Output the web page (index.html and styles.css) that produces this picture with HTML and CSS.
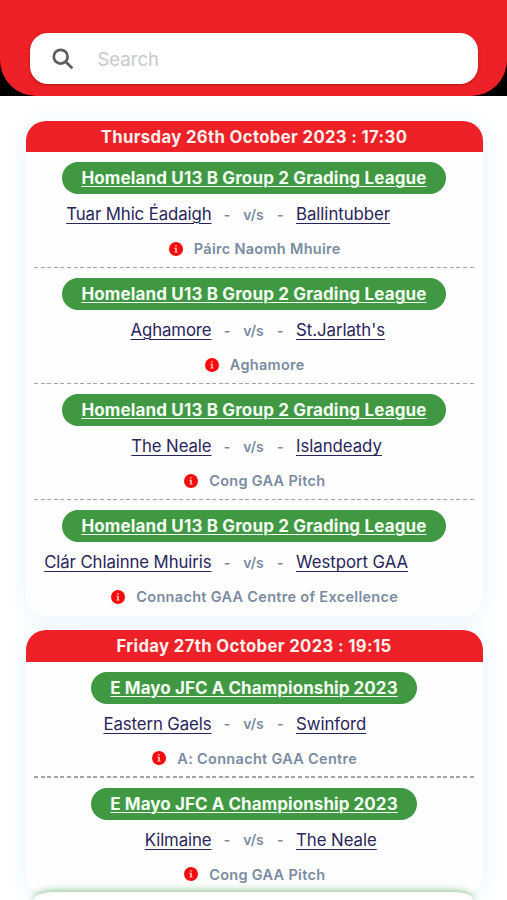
FILE: index.html
```html
<!DOCTYPE html>
<html lang="en">
<head>
<meta charset="utf-8">
<title>Fixtures</title>
<link rel="stylesheet" href="styles.css">
</head>
<body>
<svg class="defs" aria-hidden="true">
  <symbol id="info" viewBox="0 0 14 14">
    <circle cx="7" cy="7" r="7" fill="#fb0a0d"/>
    <path d="M6.2 3.2h1.6v1.4H6.2zM5.3 5.8h2.5v3.9h.9v.9H5.3v-.9h.9V6.7h-.9z" fill="#ffc9c4"/>
  </symbol>
</svg>
<header class="top">
  <div class="top-panel">
    <div class="search">
      <svg class="search-icon" viewBox="0 0 22 22"><circle cx="8.7" cy="8.7" r="6.9"/><path d="M13.7 13.7l6.6 6.6"/></svg>
      <span class="placeholder">Search</span>
    </div>
  </div>
</header>
<main class="list">
  <section class="card">
    <h2 class="date">Thursday 26th October 2023 : 17:30</h2>
    <article class="fixture">
      <a class="league">Homeland U13 B Group 2 Grading League</a>
      <div class="teams"><a class="team home">Tuar Mhic Éadaigh</a><span>-</span><span>v/s</span><span>-</span><a class="team">Ballintubber</a></div>
      <div class="venue"><svg class="info"><use href="#info"/></svg><span>Páirc Naomh Mhuire</span></div>
    </article>
    <article class="fixture">
      <a class="league">Homeland U13 B Group 2 Grading League</a>
      <div class="teams"><a class="team home">Aghamore</a><span>-</span><span>v/s</span><span>-</span><a class="team">St.Jarlath's</a></div>
      <div class="venue"><svg class="info"><use href="#info"/></svg><span>Aghamore</span></div>
    </article>
    <article class="fixture">
      <a class="league">Homeland U13 B Group 2 Grading League</a>
      <div class="teams"><a class="team home">The Neale</a><span>-</span><span>v/s</span><span>-</span><a class="team">Islandeady</a></div>
      <div class="venue"><svg class="info"><use href="#info"/></svg><span>Cong GAA Pitch</span></div>
    </article>
    <article class="fixture">
      <a class="league">Homeland U13 B Group 2 Grading League</a>
      <div class="teams"><a class="team home">Clár Chlainne Mhuiris</a><span>-</span><span>v/s</span><span>-</span><a class="team">Westport GAA</a></div>
      <div class="venue"><svg class="info"><use href="#info"/></svg><span>Connacht GAA Centre of Excellence</span></div>
    </article>
  </section>
  <section class="card card-short">
    <h2 class="date">Friday 27th October 2023 : 19:15</h2>
    <article class="fixture">
      <a class="league">E Mayo JFC A Championship 2023</a>
      <div class="teams"><a class="team home">Eastern Gaels</a><span>-</span><span>v/s</span><span>-</span><a class="team">Swinford</a></div>
      <div class="venue"><svg class="info"><use href="#info"/></svg><span>A: Connacht GAA Centre</span></div>
    </article>
    <article class="fixture">
      <a class="league">E Mayo JFC A Championship 2023</a>
      <div class="teams"><a class="team home">Kilmaine</a><span>-</span><span>v/s</span><span>-</span><a class="team">The Neale</a></div>
      <div class="venue"><svg class="info"><use href="#info"/></svg><span>Cong GAA Pitch</span></div>
    </article>
  </section>
</main>
<nav class="tabbar"></nav>
</body>
</html>
```

FILE: styles.css
```css
* { box-sizing: border-box; }
html { overflow: hidden; }
body {
  position: relative;
  margin: 0;
  height: 900px;
  overflow: hidden;
  background: #fff;
  font-family: Inter, "Liberation Sans", sans-serif;
}
.defs { display: none; }
.top { height: 96px; background: #000; }
.top-panel {
  height: 96px;
  padding: 33px 29.5px 0 30px;
  background: #ed2127;
  border-radius: 0 0 36px 36px;
}
.search {
  display: flex;
  align-items: center;
  height: 51px;
  padding-left: 21.5px;
  background: #fff;
  border-radius: 18px;
  box-shadow: 0 1px 3px rgba(80, 0, 0, .4);
}
.search-icon {
  width: 22px;
  height: 22px;
  fill: none;
  stroke: #5e5e5e;
  stroke-width: 2.7;
}
.placeholder { margin-left: 24px; font-size: 18.5px; color: #c6c8cf; }
.list { padding: 24.5px 24.5px 0 25.5px; }
.card {
  height: 495px;
  margin-bottom: 14.5px;
  background: #fefefe;
  border-radius: 20px;
  box-shadow: 0 2px 24px #e4f4fb;
}
.card-short { height: 264px; margin-bottom: 0; }
.date {
  margin: 0;
  height: 31.5px;
  line-height: 32px;
  text-align: center;
  background: #ed2127;
  color: #fff0ee;
  font-size: 16.7px;
  font-weight: 650;
  letter-spacing: .36px;
  border-radius: 20px 20px 0 0;
}
.fixture {
  position: relative;
  display: flex;
  flex-direction: column;
  align-items: center;
  height: 116px;
  padding-top: 10px;
}
.fixture:not(:last-child)::after {
  content: "";
  position: absolute;
  left: 8.5px;
  right: 8.5px;
  bottom: 0;
  height: 1.5px;
  background: repeating-linear-gradient(90deg, #a0a5ac 0 4px, transparent 4px 6.6px);
}
.league {
  height: 32px;
  line-height: 33px;
  padding: 0 19.5px;
  border-radius: 16px;
  background: #409843;
  color: #f6fff4;
  font-size: 17px;
  font-weight: 650;
  letter-spacing: .15px;
  white-space: nowrap;
  text-decoration: underline;
  text-decoration-thickness: 1.3px;
  text-underline-offset: 2px;
}
.card-short .league { letter-spacing: .06px; }
.teams {
  display: grid;
  grid-template-columns: 186px 31px 22px 31.5px 1fr;
  align-items: center;
  width: 100%;
  height: 40px;
  color: #7a8ba1;
  font-size: 14px;
  font-weight: 600;
  text-align: center;
}
.team {
  color: #29255c;
  font-size: 16.8px;
  font-weight: 400;
  letter-spacing: -.04px;
  text-align: left;
  white-space: nowrap;
  text-decoration: underline;
  text-decoration-thickness: 1.3px;
  text-underline-offset: 2.5px;
}
.home { justify-self: end; letter-spacing: -.1px; }
.venue {
  display: flex;
  align-items: center;
  gap: 11px;
  height: 29px;
  padding-left: 1.5px;
  color: #7a8ba1;
  font-size: 14.5px;
  font-weight: 600;
  letter-spacing: .3px;
}
.info { width: 14px; height: 14px; }
.tabbar {
  position: absolute;
  left: 34px;
  right: 34px;
  bottom: 0;
  height: 8px;
  background: #fff;
  border-radius: 20px 20px 0 0 / 8px 8px 0 0;
  box-shadow: 0 0 8px #63ae68;
}
```
